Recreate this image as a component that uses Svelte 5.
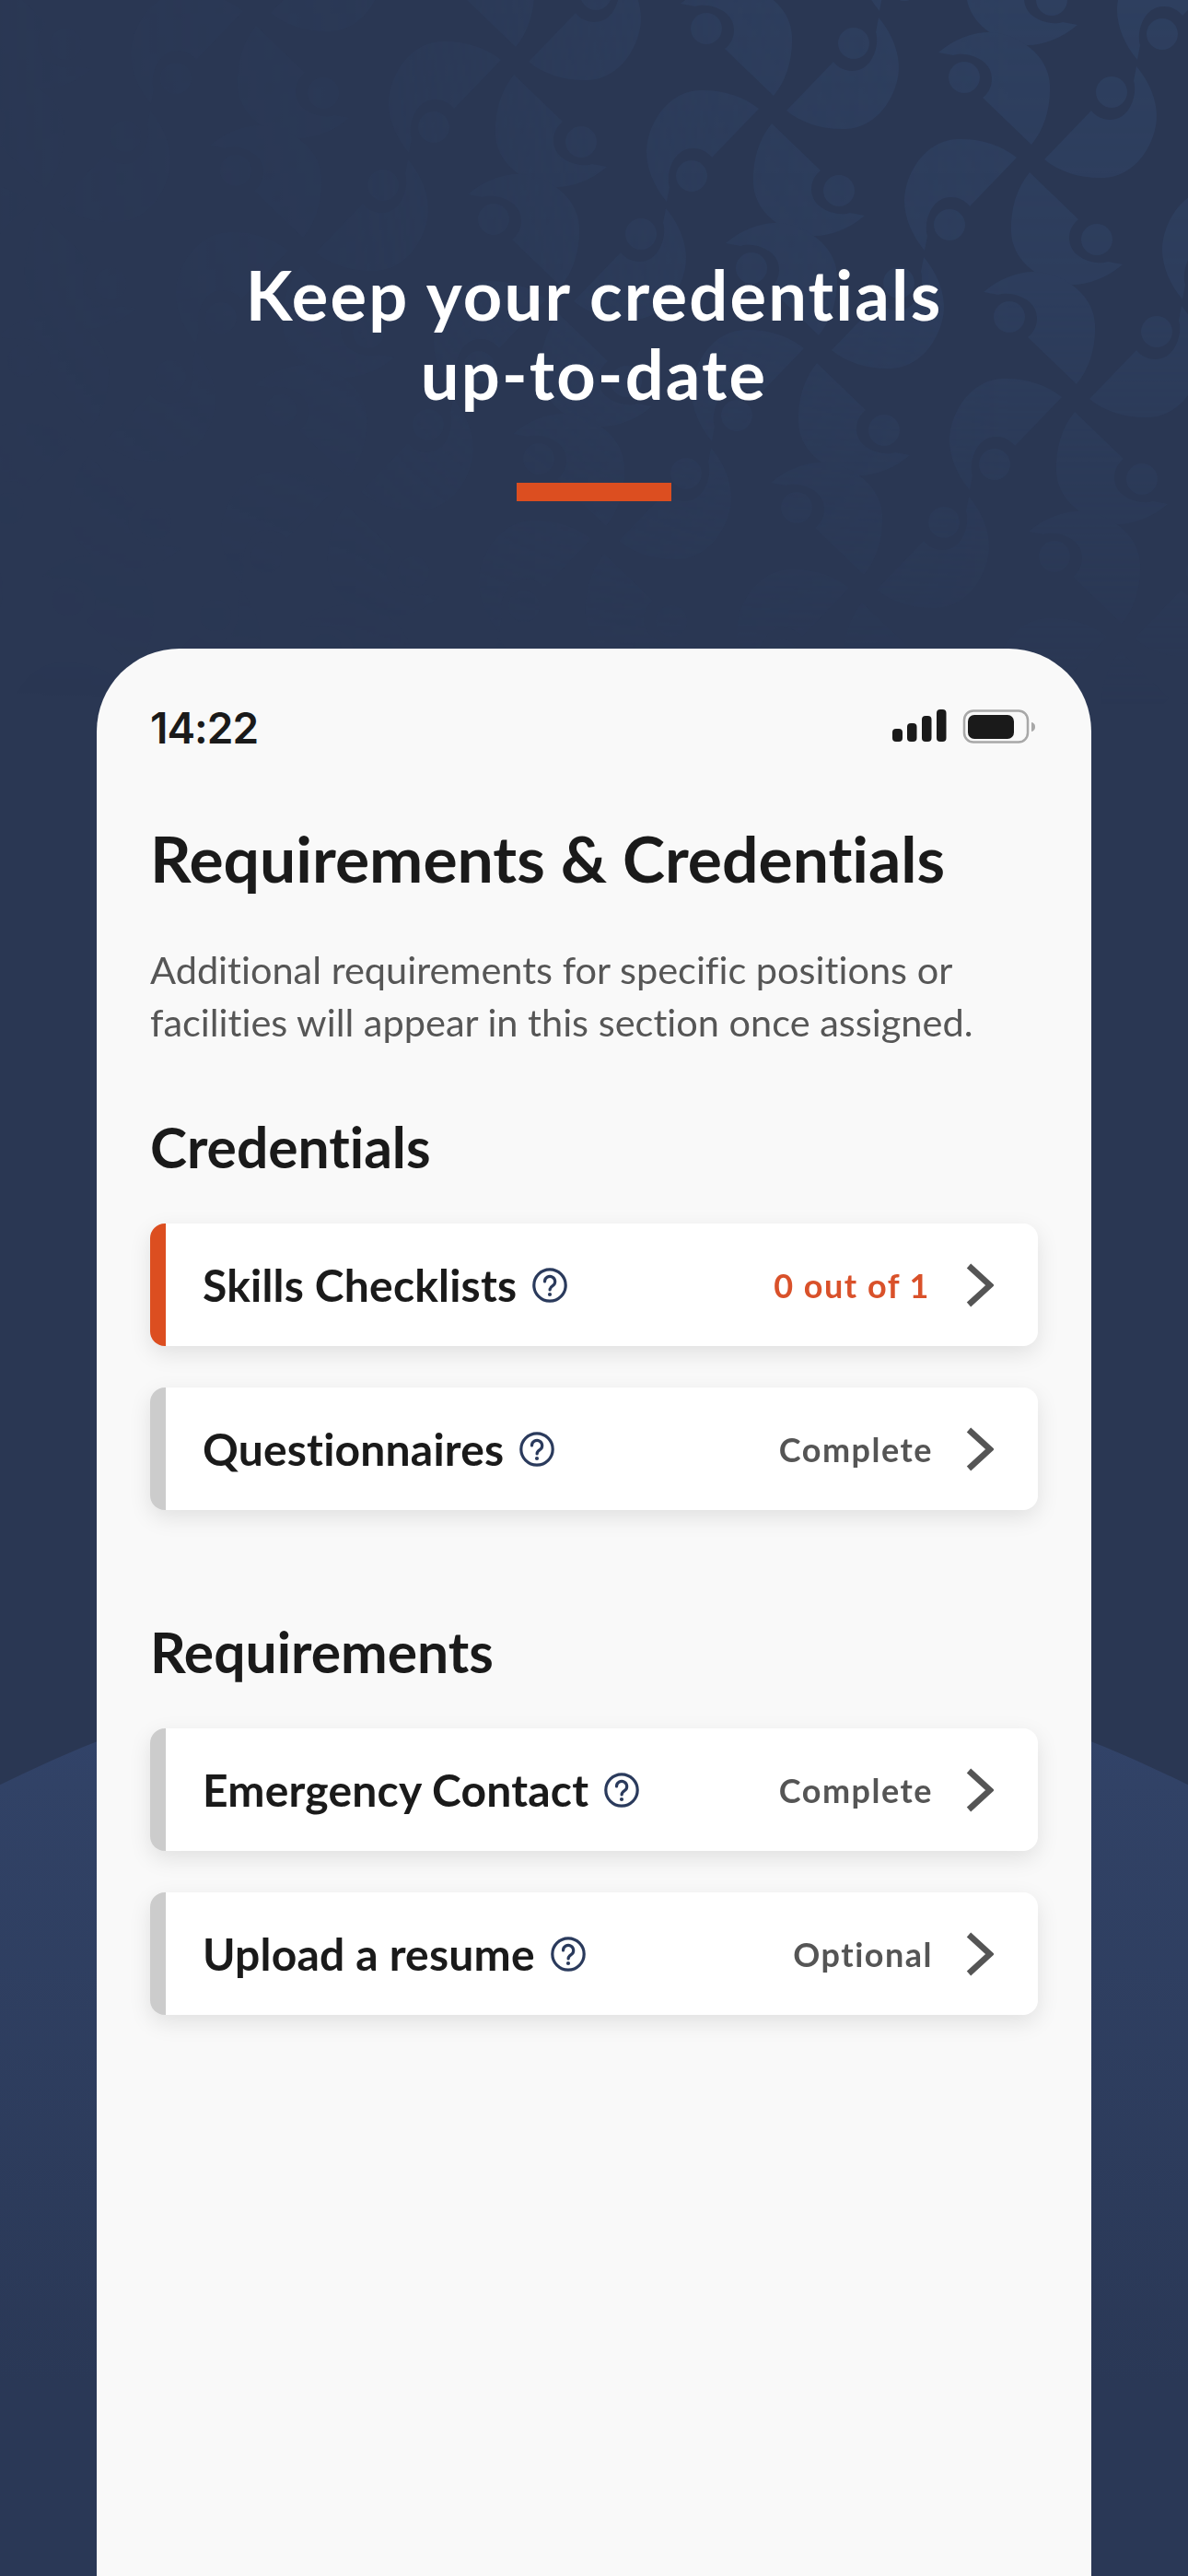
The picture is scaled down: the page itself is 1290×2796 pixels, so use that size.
<script lang="ts">
  const sections = [
    {
      title: 'Credentials',
      rows: [
        { label: 'Skills Checklists', status: '0 out of 1', alert: true },
        { label: 'Questionnaires', status: 'Complete', alert: false }
      ]
    },
    {
      title: 'Requirements',
      rows: [
        { label: 'Emergency Contact', status: 'Complete', alert: false },
        { label: 'Upload a resume', status: 'Optional', alert: false }
      ]
    }
  ];

  // lattice of the faint flower pattern behind the headline
  const motifs: { x: number; y: number }[] = [];
  for (let i = -5; i < 4; i++) {
    for (let j = -2; j < 4; j++) {
      motifs.push({ x: 1119 + i * 280 + j * 49, y: 172 + i * 53 + j * 260 });
    }
  }
  const petalTurns = [0, 90, 180, 270];
</script>

<div class="page">
  <svg class="pattern" viewBox="0 0 1290 900" width="1290" height="900" aria-hidden="true">
    <defs>
      <linearGradient id="fadeX" x1="0" y1="0" x2="1" y2="0">
        <stop offset="0" stop-color="#fff" stop-opacity="0.08" />
        <stop offset="0.3" stop-color="#fff" stop-opacity="0.25" />
        <stop offset="0.6" stop-color="#fff" stop-opacity="0.75" />
        <stop offset="0.85" stop-color="#fff" stop-opacity="1" />
      </linearGradient>
      <linearGradient id="fadeY" x1="0" y1="0" x2="0" y2="1">
        <stop offset="0" stop-color="#fff" stop-opacity="1" />
        <stop offset="0.35" stop-color="#fff" stop-opacity="0.8" />
        <stop offset="0.85" stop-color="#fff" stop-opacity="0" />
      </linearGradient>
      <mask id="fadeXMask"><rect width="1290" height="900" fill="url(#fadeX)" /></mask>
      <mask id="fadeYMask"><rect width="1290" height="900" fill="url(#fadeY)" /></mask>
    </defs>
    <g mask="url(#fadeXMask)">
      <g mask="url(#fadeYMask)">
        {#each motifs as m}
          <g transform="translate({m.x} {m.y})">
            {#each petalTurns as turn}
              <g transform="rotate({turn})" fill="#2e3f5f">
                <path d="M15 1L66-52C74-42 86-40 96-44C110-50 116-72 112-84L115-100C132-80 140-55 136-35C130-5 108 20 80 21C55 22 32 15 15 1Z" />
                <circle cx="88" cy="-72" r="17" />
              </g>
            {/each}
          </g>
        {/each}
      </g>
    </g>
  </svg>
  <div class="hill"></div>

  <header class="hero">
    <h1>Keep your credentials<br />up-to-date</h1>
    <div class="rule"></div>
  </header>

  <main class="card">
    <div class="statusbar">
      <span class="time">14:22</span>
      <svg width="155" height="37" viewBox="0 0 155 37" aria-hidden="true">
        <g fill="#1a1a1a">
          <rect x="0" y="21" width="11" height="14" rx="4" />
          <rect x="16" y="15" width="10.5" height="20" rx="4" />
          <rect x="32" y="7" width="10.5" height="28" rx="4" />
          <rect x="48" y="0" width="10.5" height="35" rx="4" />
          <rect x="82" y="6" width="50" height="26" rx="7" />
        </g>
        <rect x="78" y="1.5" width="69" height="34" rx="10" fill="none" stroke="#a8a8a8" stroke-width="2.5" />
        <path d="M151 14a5 5 0 0 1 4 5a5 5 0 0 1-4 5z" fill="#a8a8a8" />
      </svg>
    </div>

    <h2 class="page-title">Requirements &amp; Credentials</h2>
    <p class="intro">Additional requirements for specific positions or<br />facilities will appear in this section once assigned.</p>

    {#each sections as section}
      <section>
        <h3>{section.title}</h3>
        <div class="rows">
          {#each section.rows as row}
            <div class="row" class:alert={row.alert}>
              <span class="label">{row.label}</span>
              <svg class="help" width="38" height="38" viewBox="0 0 38 38" aria-hidden="true">
                <circle cx="19" cy="19" r="17.2" fill="none" stroke="#2a3a5c" stroke-width="3.2" />
                <path d="M13.5 15a5.6 5.6 0 1 1 8.6 4.7c-2 1.3-3 2.2-3 4.3" fill="none" stroke="#2a3a5c" stroke-width="3.2" stroke-linecap="round" />
                <circle cx="19" cy="29" r="2.1" fill="#2a3a5c" />
              </svg>
              <span class="status">{row.status}</span>
              <svg class="chevron" width="30" height="48" viewBox="0 0 30 48" aria-hidden="true">
                <path d="M3 3L26 24L3 45" fill="none" stroke="#555" stroke-width="6.5" />
              </svg>
            </div>
          {/each}
        </div>
      </section>
    {/each}
  </main>
</div>

<style>
  :global(body) {
    margin: 0;
    background: #2a3753;
  }

  .page {
    position: relative;
    height: 2796px;
    overflow: hidden;
    background: #2a3753;
    font-family: 'Lato', sans-serif;
    font-variant-ligatures: none;
  }

  .pattern {
    position: absolute;
    top: 0;
    left: 0;
  }

  .hill {
    position: absolute;
    left: -805px;
    top: 1786px;
    width: 2900px;
    height: 2900px;
    border-radius: 50%;
    background: linear-gradient(180deg, #33456e 0, #314266 150px, #2a3856 800px);
  }

  .hero {
    position: relative;
    padding-top: 277px;
    text-align: center;
  }

  h1 {
    margin: 0;
    color: #fff;
    font-size: 74px;
    font-weight: 700;
    line-height: 86px;
    letter-spacing: 2.2px;
  }

  .rule {
    width: 168px;
    height: 20px;
    margin: 75px auto 0;
    background: #dc4e20;
  }

  .card {
    position: relative;
    box-sizing: border-box;
    height: 2092px;
    margin: 160px 105px 0;
    padding: 60px 58px 0;
    border-radius: 90px 90px 0 0;
    background: #f9f9f9;
    color: #1a1a1a;
  }

  .statusbar {
    display: flex;
    justify-content: space-between;
    align-items: center;
    height: 52px;
  }

  .statusbar svg {
    margin: -4px 3px 0 0;
  }

  .time {
    font-family: 'Inter', sans-serif;
    font-size: 46px;
    font-weight: 600;
    letter-spacing: -1px;
  }

  .page-title {
    margin: 73px 0 0;
    font-size: 69.6px;
    font-weight: 700;
    line-height: 84px;
  }

  .intro {
    margin: 51px 0 0;
    color: #565656;
    font-size: 41.5px;
    line-height: 57px;
  }

  section h3 {
    margin: 0;
    font-size: 60.5px;
    font-weight: 700;
    line-height: 70px;
  }

  section {
    padding-top: 72px;
  }

  section + section {
    padding-top: 119px;
  }

  .rows {
    display: flex;
    flex-direction: column;
    gap: 45px;
    margin-top: 48px;
  }

  .row {
    display: flex;
    align-items: center;
    box-sizing: border-box;
    height: 133px;
    padding-left: 40px;
    border-left: 17px solid #cccccc;
    border-radius: 16px;
    background: #fff;
    box-shadow: 0 8px 24px rgba(0, 0, 0, 0.1);
  }

  .row.alert {
    border-left-color: #dc4e20;
  }

  .label {
    font-size: 48px;
    font-weight: 700;
    letter-spacing: 0.2px;
  }

  .help {
    margin-left: 17px;
  }

  .status {
    margin-left: auto;
    color: #555;
    font-size: 36px;
    font-weight: 700;
    letter-spacing: 1.5px;
  }

  .alert .status {
    margin-right: 3px;
    color: #d9512a;
  }

  .chevron {
    margin: 0 48px 0 36px;
  }
</style>
